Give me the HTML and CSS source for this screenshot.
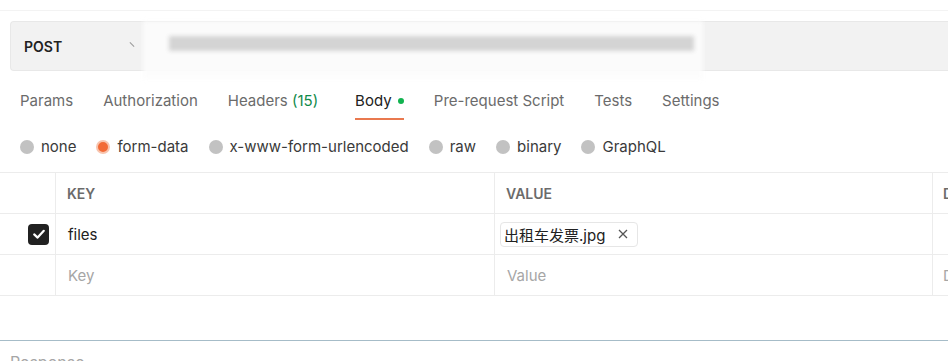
FILE: index.html
```html
<!DOCTYPE html>
<html lang="zh">
<head>
<meta charset="utf-8">
<link rel="stylesheet" href="styles.css">
</head>
<body>
<div class="topline"></div>
<div class="reqbar">
  <div class="method"><span class="method-name">POST</span><span class="chev"></span></div>
  <div class="url"><div class="url-blur"></div></div>
</div>
<nav class="tabs">
  <span class="tab">Params</span>
  <span class="tab">Authorization</span>
  <span class="tab tab-headers">Headers <span class="count">(15)</span></span>
  <span class="tab active">Body <span class="dot"></span></span>
  <span class="tab">Pre-request Script</span>
  <span class="tab">Tests</span>
  <span class="tab">Settings</span>
</nav>
<div class="radios">
  <label class="radio"><span class="circle"></span>none</label>
  <label class="radio"><span class="circle on"></span>form-data</label>
  <label class="radio"><span class="circle"></span>x-www-form-urlencoded</label>
  <label class="radio"><span class="circle"></span>raw</label>
  <label class="radio"><span class="circle"></span>binary</label>
  <label class="radio"><span class="circle"></span>GraphQL</label>
</div>
<div class="table">
  <div class="cell"></div>
  <div class="cell head">KEY</div>
  <div class="cell head">VALUE</div>
  <div class="cell head clip">D</div>

  <div class="cell check"><span class="cb"><svg viewBox="0 0 20 20" width="20" height="20"><path d="M5.2 10.4 L8.6 13.6 L14.8 6.8" fill="none" stroke="#fff" stroke-width="2.2" stroke-linecap="round" stroke-linejoin="round"/></svg></span></div>
  <div class="cell text">files</div>
  <div class="cell chipcell"><span class="chip">出租车发票.jpg<svg class="x" viewBox="0 0 10 10" width="10" height="10"><path d="M1 1 L9 9 M9 1 L1 9" stroke="#555" stroke-width="1.3" fill="none"/></svg></span></div>
  <div class="cell"></div>

  <div class="cell"></div>
  <div class="cell text ph">Key</div>
  <div class="cell text ph">Value</div>
  <div class="cell text ph clip">D</div>
</div>
<div class="response">Response</div>
</body>
</html>
```
FILE: styles.css
```css
* { box-sizing: border-box; }
html, body { margin: 0; padding: 0; background: #fff; }
body {
  font-family: Inter, "Noto Sans CJK SC", sans-serif;
  font-size: 15px;
  color: #212121;
  width: 948px;
  height: 361px;
  overflow: hidden;
}
.topline { height: 11px; border-bottom: 1px solid #f3f3f3; }
.reqbar {
  margin: 10px 0 0 10px;
  height: 50px;
  background: #f2f2f2;
  border: 1px solid #e8e8e8;
  border-right: none;
  border-radius: 4px 0 0 4px;
  display: flex;
  align-items: center;
}
.method {
  width: 132px;
  display: flex;
  align-items: center;
  padding-left: 13px;
}
.method-name { font-weight: 600; font-size: 14px; color: #212121; flex: 1; }
.chev {
  width: 6px; height: 1px;
  background: #9a9a9a;
  transform: rotate(45deg);
  margin-right: 8px;
  margin-bottom: 4px;
}
.url {
  width: 560px;
  height: 58px;
  margin-top: 8px;
  display: flex;
  align-items: center;
  background: rgba(252,252,252,0.9);
  filter: blur(2px);
}
.url-blur {
  margin-left: 26px;
  width: 525px;
  height: 15px;
  margin-top: -14px;
  background: #d4d4d4;
}
.tabs {
  display: flex;
  gap: 30px;
  margin-top: 20px;
  padding-left: 20px;
  color: #6b6b6b;
}
.tab {
  line-height: 20px;
  padding-bottom: 7px;
  border-bottom: 2px solid transparent;
  white-space: nowrap;
}
.tab-headers { margin-right: 7px; }
.count { color: #0f8a4a; }
.tab.active { color: #212121; border-bottom-color: #e9794f; }
.dot {
  display: inline-block;
  width: 6px; height: 6px;
  border-radius: 50%;
  background: #11b34f;
  vertical-align: middle;
  margin-left: 2px;
  margin-bottom: 2px;
}
.radios {
  display: flex;
  gap: 20px;
  padding: 17px 0 15px 20px;
  line-height: 20px;
  color: #3a3a3a;
}
.radio { display: flex; align-items: center; gap: 7px; }
.circle {
  width: 14px; height: 14px;
  border-radius: 50%;
  background: #c2c2c2;
}
.circle.on {
  background: #f26a36;
  border: 2px solid #f8c4ae;
}
.table {
  display: grid;
  grid-template-columns: 56px 439px 438px 1fr;
  border-top: 1px solid #ececec;
}
.cell {
  height: 41px;
  border-bottom: 1px solid #ececec;
  border-right: 1px solid #ececec;
  display: flex;
  align-items: center;
  padding-left: 11px;
  overflow: hidden;
  white-space: nowrap;
}
.cell:nth-child(4n) { border-right: none; }
.cell.clip { padding-left: 10px; }
.head { font-weight: 600; font-size: 14px; color: #6b6b6b; }
.text { padding-left: 12px; color: #212121; }
.ph { color: #a6a6a6; }
.check { justify-content: flex-end; padding-right: 6px; }
.cb {
  width: 21px; height: 21px;
  background: #212121;
  border-radius: 4px;
  display: flex;
  align-items: center;
  justify-content: center;
}
.chipcell { padding-left: 5px; }
.chip {
  display: inline-flex;
  align-items: center;
  height: 25px;
  border: 1px solid #e6e6e6;
  border-radius: 4px;
  padding: 0 9px 0 3px;
  color: #212121;
}
.x { margin-left: 13px; }
.response {
  margin-top: 44px;
  border-top: 1px solid #a6bcc8;
  padding: 11px 0 0 10px;
  color: #a6a6a6;
  font-size: 16px;
}
```
